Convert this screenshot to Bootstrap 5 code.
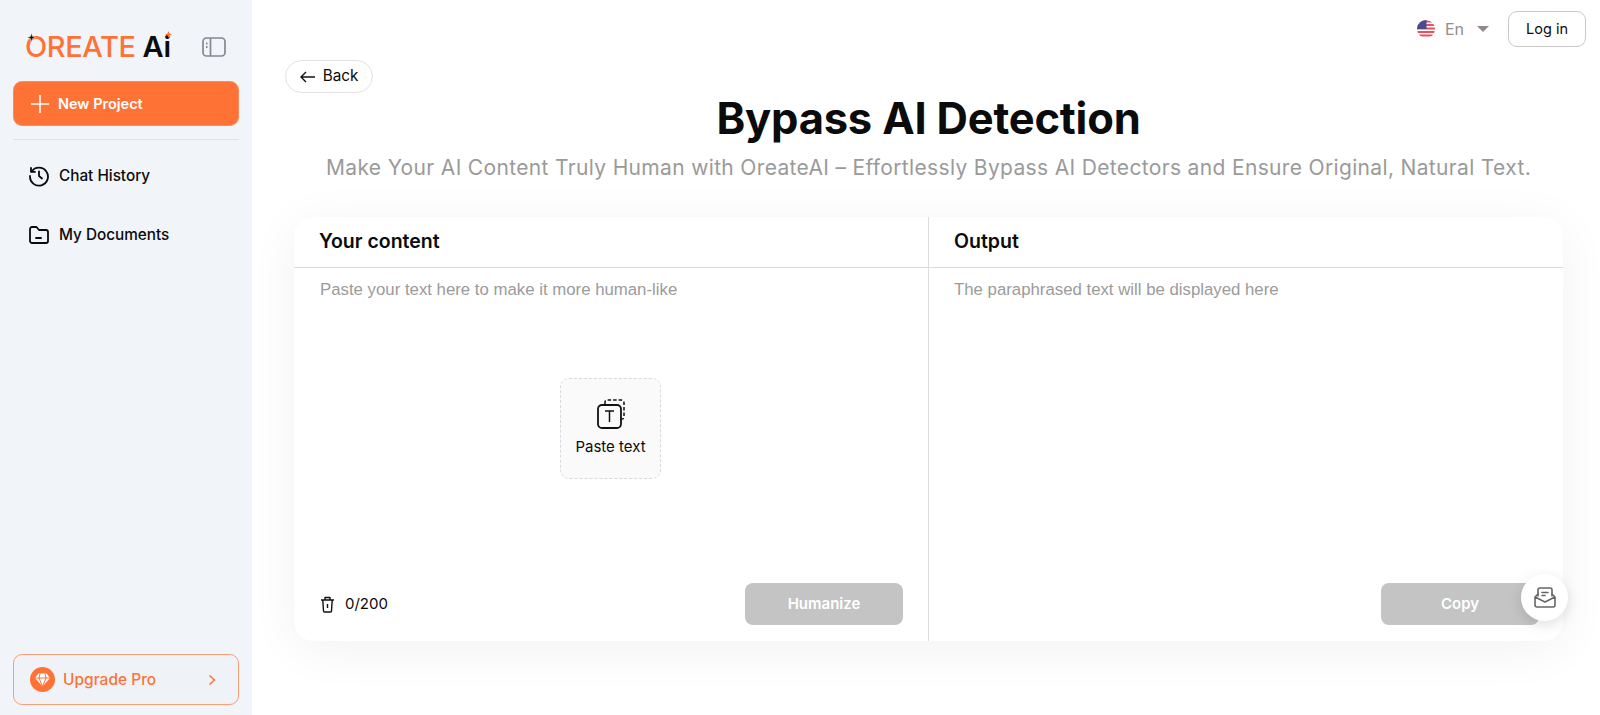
<!DOCTYPE html>
<html lang="en">
<head>
    <meta charset="UTF-8">
    <meta name="viewport" content="width=device-width, initial-scale=1.0">
    <title>Bypass AI Detection</title>
    <link href="https://cdn.jsdelivr.net/npm/bootstrap@5.3.0/dist/css/bootstrap.min.css" rel="stylesheet">
    <style>
        html, body { height: 100%; }
        body { font-family: "Inter", "Liberation Sans", sans-serif; color: #0b0b0b; overflow: hidden; background: #fff; }
        .side-bar { width: 252px; height: 715px; background: #f1f4f9; padding: 0 13px 10px; flex-shrink: 0; }
        .logo-row { height: 81px; padding: 12px 13px 0 12px; }
        .logo-word { position: relative; font-size: 29px; font-weight: 500; line-height: 1; color: #ff7236; letter-spacing: -.4px; }
        .logo-word b { color: #0b0b0b; font-weight: 600; margin-left: 7px; }
        .logo-star { position: absolute; left: 2px; top: 1px; }
        .logo-spark { position: absolute; right: -1px; top: -1px; }
        .new-btn { height: 45px; background: #ff7236; border-radius: 9px; color: #fff; font-size: 14.5px; font-weight: 600; padding: 0 16px; border: 1px solid #ff8a57; }
        .new-btn:hover { background: #ff7236; color: #fff; }
        .side-line { border-top: 1px solid #dfe2e7; margin: 13px 0 0; }
        .side-item { height: 58px; padding: 0 15px; font-size: 15.300px; font-weight: 500; color: #0b0b0b; text-decoration: none; gap: 9px; }
        .side-list { padding-top: 7px; }
        .side-item + .side-item { margin-top: 1px; }
        .upgrade-btn { height: 51px; border: 1px solid #ff9d78; border-radius: 9px; color: #ff7236; font-size: 15.500px; font-weight: 500; padding: 0 22px 0 16px; background: #eff2f7; text-decoration: none; }
        .main-pane { position: relative; min-width: 0; padding: 0 37px 0 42px; }
        .top-bar { height: 46px; margin-right: -23px; padding-top: 11px; }
        .lang-text { color: #8f8f8f; font-size: 16px; margin: 0 13px 0 10px; }
        .lang-caret { width: 0; height: 0; border-left: 6.500px solid transparent; border-right: 6.500px solid transparent; border-top: 6px solid #8f8a88; margin-right: 19px; }
        .login-btn { height: 36px; width: 78px; border: 1px solid #c9c9c9; border-radius: 9px; font-size: 14.5px; color: #0b0b0b; background: #fff; padding: 0; }
        .back-btn { height: 33px; width: 88px; margin: 14px 0 0 -9px; border: 1px solid #e2e2e2; border-radius: 17px; font-size: 15.300px; color: #0b0b0b; background: #fff; padding: 0; gap: 8px; }
        .page-title { font-size: 43.500px; font-weight: 700; text-align: center; margin: -3px 0 0; line-height: 56px; letter-spacing: -.2px; }
        .page-sub { font-size: 21px; text-align: center; color: #9a9a9a; margin: 8px 0 0; line-height: 28px; white-space: nowrap; letter-spacing: .34px; }
        .tool-card { height: 424px; margin-top: 35px; border-radius: 20px; background: #fff; box-shadow: 0 8px 50px rgba(0, 0, 0, .055); overflow: visible; }
        .tool-col { flex: 1 1 0; min-width: 0; }
        .tool-col + .tool-col { border-left: 1px solid #dcdcdc; }
        .tool-head { height: 51px; border-bottom: 1px solid #dcdcdc; padding: 0 25px; font-size: 19.500px; font-weight: 600; }
        .tool-body { position: relative; padding: 12px 25px 16px 26px; }
        .tool-col + .tool-col .tool-head, .tool-col + .tool-col .tool-body { padding-left: 25px; padding-right: 24px; }
        .hint-text { font-family: "Liberation Sans", sans-serif; font-size: 16.800px; color: #9b9b9b; line-height: 20px; }
        .paste-box { position: absolute; left: 266px; top: 110px; width: 101px; height: 101px; background: #fafafa; border: 1px dashed #d9d9d9; border-radius: 9px; font-size: 15px; gap: 7px; }
        .grey-btn { width: 158px; height: 42px; border: 0; border-radius: 8px; background: #c4c4c4; color: #fff; font-size: 15px; font-weight: 600; padding: 0; }
        .count-text { font-size: 15px; gap: 10px; }
        .float-btn { position: absolute; left: 1521px; top: 574px; width: 47px; height: 47px; border-radius: 50%; background: #fff; box-shadow: 0 4px 14px rgba(0, 0, 0, .13); }
    </style>
</head>
<body>
    <div class="d-flex">
        <!-- Sidebar -->
        <aside class="side-bar d-flex flex-column">
            <div class="logo-row d-flex align-items-center justify-content-between">
                <span class="logo-word">OREATE<b>Ai</b>
                    <svg class="logo-star" width="9" height="9" viewBox="0 0 10 10"><path d="M5 0 6.2 3.8 10 5 6.2 6.2 5 10 3.800 6.200 0 5 3.800 3.800Z" fill="#111" stroke="#f1f4f9" stroke-width=".6"/></svg>
                    <svg class="logo-spark" width="7" height="7" viewBox="0 0 10 10"><path d="M5 0 6.400 3.600 10 5 6.400 6.400 5 10 3.600 6.400 0 5 3.600 3.600Z" fill="#ff7236"/></svg>
                </span>
                <svg width="24" height="20" viewBox="0 0 24 20" fill="none" stroke="#85888e" stroke-width="1.700"><rect x="1" y="1" width="22" height="18" rx="3.500"/><path d="M8.500 1v18"/><path d="M4 6.500h1.500M4 10h1.500" stroke-width="2"/></svg>
            </div>
            <button class="new-btn btn d-flex align-items-center gap-2" type="button">
                <svg width="20" height="20" viewBox="0 0 20 20" stroke="#fff" stroke-width="1.600"><path d="M10 1v18M1 10h18"/></svg>
                <span>New Project</span>
            </button>
            <div class="side-line"></div>
            <div class="side-list">
                <a class="side-item d-flex align-items-center" href="#">
                    <svg width="22" height="22" viewBox="0 0 22 22" fill="none" stroke="#0b0b0b" stroke-width="1.800" stroke-linecap="round" stroke-linejoin="round"><path d="M3.600 6.500A9 9 0 1 1 2 11"/><path d="M3 2.800v4h4"/><path d="M11 6.500V11l3 2.500"/></svg>
                    Chat History
                </a>
                <a class="side-item d-flex align-items-center" href="#">
                    <svg width="22" height="20" viewBox="0 0 22 20" fill="none" stroke="#0b0b0b" stroke-width="1.800" stroke-linejoin="round" stroke-linecap="round"><path d="M2 4a2 2 0 0 1 2-2h4.500l2.500 3h7a2 2 0 0 1 2 2v9a2 2 0 0 1-2 2H4a2 2 0 0 1-2-2Z"/><path d="M8 13h5"/></svg>
                    My Documents
                </a>
            </div>
            <a class="upgrade-btn mt-auto d-flex align-items-center" href="#">
                <svg class="me-2" width="25" height="25" viewBox="0 0 25 25"><circle cx="12.500" cy="12.500" r="12.500" fill="#ff7236"/><path d="M8.500 6.500h8l3.500 4.500-7.500 8.500L5 11Z" fill="#fff"/><path d="M5 11h15M10 6.500 9 11l3.500 8.500L16 11l-1-4.500" fill="none" stroke="#ff7236" stroke-width="1"/></svg>
                <span>Upgrade Pro</span>
                <svg class="ms-auto" width="8" height="12" viewBox="0 0 8 12" fill="none" stroke="#ff7236" stroke-width="1.500"><path d="m1.500 1.500 5 4.500-5 4.500"/></svg>
            </a>
        </aside>

        <!-- Main -->
        <main class="main-pane flex-grow-1">
            <div class="top-bar d-flex align-items-center justify-content-end">
                <svg width="18" height="18" viewBox="0 0 18 18">
                    <defs><clipPath id="flagClip"><circle cx="9" cy="9" r="9"/></clipPath></defs>
                    <g clip-path="url(#flagClip)">
                        <rect width="18" height="18" fill="#fff"/>
                        <path d="M0 1.500h18M0 5h18M0 8.500h18M0 12h18M0 15.500h18" stroke="#e8505b" stroke-width="1.800"/>
                        <rect width="9.500" height="9" fill="#4a4a8c"/>
                    </g>
                </svg>
                <span class="lang-text">En</span>
                <span class="lang-caret"></span>
                <button class="login-btn" type="button">Log in</button>
            </div>
            <button class="back-btn d-flex align-items-center justify-content-center" type="button">
                <svg width="15" height="12" viewBox="0 0 15 12" fill="none" stroke="#111" stroke-width="1.400"><path d="M15 6H1M6 1 1 6l5 5"/></svg>
                Back
            </button>
            <h1 class="page-title">Bypass AI Detection</h1>
            <p class="page-sub">Make Your AI Content Truly Human with OreateAI – Effortlessly Bypass AI Detectors and Ensure Original, Natural Text.</p>

            <div class="tool-card d-flex">
                <section class="tool-col d-flex flex-column">
                    <div class="tool-head d-flex align-items-center">Your content</div>
                    <div class="tool-body flex-grow-1 d-flex flex-column">
                        <div class="hint-text">Paste your text here to make it more human-like</div>
                        <div class="paste-box d-flex flex-column align-items-center justify-content-center">
                            <svg width="32" height="30" viewBox="0 0 32 30" fill="none" stroke="#111" stroke-width="1.500">
                                <path d="M10 5V3a2 2 0 0 1 2-2h14a3 3 0 0 1 3 3v14a2 2 0 0 1-2 2h-2" stroke-dasharray="3.500 2"/>
                                <rect x="3" y="6" width="23" height="23" rx="4" stroke-width="1.800"/>
                                <path d="M10 12h9M14.500 12v11"/>
                            </svg>
                            Paste text
                        </div>
                        <div class="mt-auto d-flex align-items-center justify-content-between">
                            <span class="count-text d-flex align-items-center">
                                <svg width="15" height="17" viewBox="0 0 15 17" fill="none" stroke="#111" stroke-width="1.400" stroke-linejoin="round"><path d="M1 4h13M5 4V1.500h5V4M2.800 4l.7 11a1 1 0 0 0 1 1h6a1 1 0 0 0 1-1l.7-11M7.500 8v4"/></svg>
                                0/200
                            </span>
                            <button class="grey-btn" type="button">Humanize</button>
                        </div>
                    </div>
                </section>
                <section class="tool-col d-flex flex-column">
                    <div class="tool-head d-flex align-items-center">Output</div>
                    <div class="tool-body flex-grow-1 d-flex flex-column">
                        <div class="hint-text">The paraphrased text will be displayed here</div>
                        <div class="mt-auto d-flex justify-content-end">
                            <button class="grey-btn" type="button">Copy</button>
                        </div>
                    </div>
                </section>
            </div>
        </main>
    </div>

    <div class="float-btn d-flex align-items-center justify-content-center">
        <svg width="22" height="21" viewBox="0 0 22 21" fill="none" stroke="#666" stroke-width="1.600" stroke-linejoin="round" stroke-linecap="round"><path d="M4 9V3a2 2 0 0 1 2-2h10a2 2 0 0 1 2 2v6"/><path d="M8 5.500h6M8 8.500h3"/><path d="M4 7 1 10v8a2 2 0 0 0 2 2h16a2 2 0 0 0 2-2v-8l-3-3M1 10l10 5 10-5"/></svg>
    </div>

    <script src="https://cdn.jsdelivr.net/npm/bootstrap@5.3.0/dist/js/bootstrap.bundle.min.js"></script>
</body>
</html>
